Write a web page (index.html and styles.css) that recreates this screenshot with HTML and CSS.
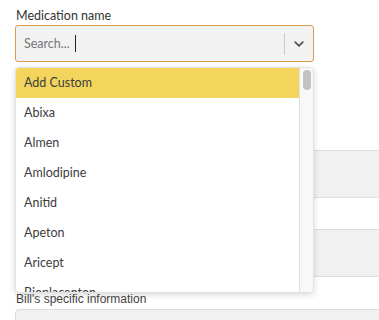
FILE: index.html
```html
<html>
<head>
    <title>Medication</title>
    <link rel="stylesheet" href="styles.css">
</head>
<body>
    <div class="form">
        <div class="field">
            <div class="label">Medication name</div>
            <div class="select">
                <div class="control">
                    <div class="value">
                        <span class="placeholder">Search...</span>
                        <span class="caret"></span>
                    </div>
                    <div class="indicators">
                        <span class="sep"></span>
                        <svg class="chevron" width="10" height="6" viewBox="0 0 10 6">
                            <path d="M1.2 1.2 L5 4.8 L8.8 1.2" fill="none" stroke="#555" stroke-width="1.8" stroke-linecap="round" stroke-linejoin="round"/>
                        </svg>
                    </div>
                </div>
                <div class="menu">
                    <div class="options">
                        <div class="option active">Add Custom</div>
                        <div class="option">Abixa</div>
                        <div class="option">Almen</div>
                        <div class="option">Amlodipine</div>
                        <div class="option">Anitid</div>
                        <div class="option">Apeton</div>
                        <div class="option">Aricept</div>
                        <div class="option">Bioplacenton</div>
                        <div class="option">Blopress</div>
                    </div>
                    <div class="scrollbar"><div class="thumb"></div></div>
                </div>
            </div>
        </div>
        <div class="field">
            <div class="label">Dosage</div>
            <div class="box short"></div>
        </div>
        <div class="field">
            <div class="label">Frequency</div>
            <div class="box"></div>
        </div>
        <div class="field">
            <div class="label">Duration</div>
            <div class="box"></div>
        </div>
        <div class="field">
            <div class="label alt">Bill's specific information</div>
            <div class="box notes">Mention any other notes related to this Medication</div>
        </div>
    </div>
</body>
</html>
```

FILE: styles.css
```css
body {
    margin: 0;
    font-family: Lato, "Open Sans", sans-serif;
    color: #333;
    background: #fff;
    overflow: hidden;
}
.form {
    width: 420px;
    padding: 8px 0 0 15px;
}
.field {
    margin-bottom: 14px;
}
.label {
    font-size: 12.5px;
    line-height: 16px;
    margin: 0 0 1px 1px;
    color: #333;
}
.label.alt {
    font-family: "Liberation Sans", Arial, sans-serif;
    font-size: 12px;
    line-height: 17px;
    margin-top: 1px;
    color: #444;
}
.select {
    position: relative;
    width: 299px;
}
.control {
    height: 35px;
    border: 1px solid #d99b4f;
    border-radius: 3px;
    background: #f2f2f2;
    display: flex;
    align-items: center;
}
.value {
    flex: 1;
    display: flex;
    align-items: center;
    padding-left: 8px;
}
.placeholder {
    font-size: 12.5px;
    color: #777;
}
.caret {
    width: 1px;
    height: 17px;
    background: #222;
    margin-left: 5px;
}
.indicators {
    display: flex;
    align-items: center;
    height: 100%;
}
.sep {
    width: 1px;
    height: 22px;
    background: #c8c8c8;
}
.chevron {
    margin: 1px 9px 0 9px;
}
.menu {
    position: absolute;
    top: calc(100% + 5px);
    left: 0;
    right: 0;
    height: 224px;
    background: #fff;
    border: 1px solid #e2e2e2;
    border-radius: 4px;
    box-shadow: 0 2px 6px rgba(0, 0, 0, 0.15);
    display: flex;
    overflow: hidden;
    z-index: 2;
}
.options {
    flex: 1;
}
.option {
    height: 30px;
    line-height: 29px;
    padding: 0 8px;
    font-size: 12.5px;
    color: #3c3c3c;
}
.option.active {
    background: #f3d55e;
}
.scrollbar {
    width: 13px;
    background: #f8f8f8;
    border-left: 1px solid #e0e0e0;
}
.thumb {
    width: 8px;
    height: 20px;
    margin: 2px auto 0;
    border-radius: 4px;
    background: #c2c2c2;
}
.box {
    height: 46px;
    background: #f1f1f1;
    border: 1px solid #dedede;
    border-radius: 4px;
}
.box.short {
    width: 297px;
    height: 24px;
}
.box.notes {
    height: 60px;
    padding: 8px 0 0 28px;
    font-size: 12px;
    color: #999;
    box-sizing: border-box;
}
```
